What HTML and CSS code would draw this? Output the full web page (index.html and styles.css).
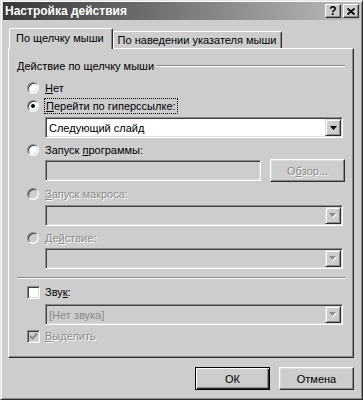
FILE: index.html
```html
<!DOCTYPE html>
<html lang="ru">
<head>
<meta charset="utf-8">
<title>Настройка действия</title>
<link rel="stylesheet" href="styles.css">
</head>
<body>
<div class="window">
  <div class="titlebar">
    <span class="title">Настройка действия</span>
    <div class="tbtns">
      <span class="tbtn">?</span>
      <span class="tbtn"><svg width="8" height="7" viewBox="0 0 8 7"><path d="M0.5 0.5 L7.5 6.5 M7.5 0.5 L0.5 6.5" stroke="#000" stroke-width="1.8"/></svg></span>
    </div>
  </div>
  <div class="content">
    <div class="tabs">
      <div class="tab active">По щелчку мыши</div>
      <div class="tab">По наведении указателя мыши</div>
    </div>
    <div class="panel">
      <div class="group-label"><span>Действие по щелчку мыши</span><i class="etch"></i></div>

      <div class="opt mt7"><span class="radio"></span><span><u>Н</u>ет</span></div>
      <div class="opt mt2"><span class="radio on"></span><span class="focus"><u>П</u>ерейти по гиперссылке:</span></div>
      <div class="field mt3"><span class="ftext">Следующий слайд</span><span class="dd"><svg width="7" height="4" viewBox="0 0 7 4"><path d="M0 0 H7 L3.5 4 Z" fill="#000"/></svg></span></div>

      <div class="opt mt4"><span class="radio"></span><span>Запуск <u>п</u>рограммы:</span></div>
      <div class="prog mt1">
        <span class="field off wide"></span>
        <span class="btn dis">О<u>б</u>зор...</span>
      </div>

      <div class="opt mt4"><span class="radio off"></span><span class="dis"><u>З</u>апуск макроса:</span></div>
      <div class="field off mt3"><span class="ftext"></span><span class="dd"><svg width="8" height="5" viewBox="0 0 8 5"><path d="M1 1 H8 L4.5 5 Z" fill="#fff"/><path d="M0 0 H7 L3.5 4 Z" fill="#8a8a8a"/></svg></span></div>

      <div class="opt mt4"><span class="radio off"></span><span class="dis">Де<u>й</u>ствие:</span></div>
      <div class="field off mt2"><span class="ftext"></span><span class="dd"><svg width="8" height="5" viewBox="0 0 8 5"><path d="M1 1 H8 L4.5 5 Z" fill="#fff"/><path d="M0 0 H7 L3.5 4 Z" fill="#8a8a8a"/></svg></span></div>

      <div class="sep"></div>

      <div class="opt chk mt5"><span class="check"></span><span>Зву<u>к</u>:</span></div>
      <div class="field off mt4"><span class="ftext grey">[Нет звука]</span><span class="dd"><svg width="8" height="5" viewBox="0 0 8 5"><path d="M1 1 H8 L4.5 5 Z" fill="#fff"/><path d="M0 0 H7 L3.5 4 Z" fill="#8a8a8a"/></svg></span></div>
      <div class="opt chk mt3"><span class="check off"><svg width="9" height="9" viewBox="0 0 9 9"><path d="M1 4 L3.5 6.5 L8 1.5" stroke="#8a8a8a" stroke-width="2" fill="none"/></svg></span><span class="dis"><u>В</u>ыделить</span></div>
    </div>
    <div class="actions">
      <span class="btn default">ОК</span>
      <span class="btn">Отмена</span>
    </div>
  </div>
</div>
</body>
</html>
```
FILE: styles.css
```css
body {
  margin: 0;
  width: 363px;
  height: 400px;
  overflow: hidden;
  background: #cdcdcd;
  font-family: "Liberation Sans", Arial, sans-serif;
  font-size: 11px;
  color: #000;
}

.window {
  box-sizing: border-box;
  width: 363px;
  height: 400px;
  background: #cdcdcd;
  border: 1px solid;
  border-color: #e4e4e4 #2e2e2e #2e2e2e #e4e4e4;
  box-shadow: inset 1px 1px 0 #fff, inset -1px -1px 0 #8a8a8a;
  padding: 1px 2px 2px;
}

.titlebar {
  height: 18px;
  display: flex;
  align-items: center;
  justify-content: space-between;
  padding: 0 1px 0 2px;
  background: linear-gradient(to right, #383838, #bcbcbc);
}

.title {
  color: #fff;
  font-weight: bold;
  font-size: 12px;
}

.tbtns {
  display: flex;
  gap: 2px;
}

.tbtn {
  box-sizing: border-box;
  width: 16px;
  height: 14px;
  background: #cdcdcd;
  border: 1px solid;
  border-color: #fff #2e2e2e #2e2e2e #fff;
  box-shadow: inset -1px -1px 0 #8a8a8a;
  display: flex;
  align-items: center;
  justify-content: center;
  font-weight: bold;
  font-size: 12px;
  line-height: 1;
}

.content {
  padding-left: 5px;
}

.tabs {
  display: flex;
  align-items: flex-end;
  height: 20px;
  margin-top: 8px;
  padding-left: 1px;
  position: relative;
  z-index: 1;
}

.tab {
  box-sizing: border-box;
  height: 17px;
  padding: 0 5px 0 4px;
  display: flex;
  align-items: center;
  background: #cdcdcd;
  border: 1px solid;
  border-bottom: none;
  border-color: #fff #2e2e2e transparent #fff;
  border-radius: 2px 2px 0 0;
  box-shadow: inset -1px 0 0 #8a8a8a;
  white-space: nowrap;
}

.tab.active {
  height: 21px;
  margin-bottom: -1px;
  padding: 0 8px 2px 6px;
}

.panel {
  box-sizing: border-box;
  width: 346px;
  height: 310px;
  border: 1px solid;
  border-color: #fff #2e2e2e #2e2e2e #fff;
  box-shadow: inset -1px -1px 0 #8a8a8a;
  padding: 10px 8px 0 8px;
}

.group-label {
  display: flex;
  align-items: center;
  height: 14px;
  gap: 3px;
}

.etch {
  flex: 1;
  height: 0;
  border-top: 1px solid #8a8a8a;
  border-bottom: 1px solid #fff;
}

.sep {
  height: 0;
  margin-top: 8px;
  border-top: 1px solid #8a8a8a;
  border-bottom: 1px solid #fff;
}

.opt {
  display: flex;
  align-items: center;
  height: 16px;
  margin-left: 10px;
  gap: 6px;
}

.opt.chk {
  gap: 5px;
}

.mt1 { margin-top: 1px; }
.mt2 { margin-top: 2px; }
.mt3 { margin-top: 3px; }
.mt4 { margin-top: 4px; }
.mt5 { margin-top: 5px; }
.mt7 { margin-top: 7px; }

.radio {
  position: relative;
  box-sizing: border-box;
  width: 12px;
  height: 12px;
  border-radius: 50%;
  border: 1px solid;
  border-color: #8a8a8a #fff #fff #8a8a8a;
  box-shadow: inset 1px 1px 0 #404040, inset -1px -1px 0 #dcdcdc;
  background: #fff;
  flex: none;
}

.radio.on::after {
  content: "";
  position: absolute;
  left: 3px;
  top: 3px;
  width: 4px;
  height: 4px;
  border-radius: 50%;
  background: #000;
}

.radio.off {
  background: #cdcdcd;
}

.check {
  box-sizing: border-box;
  width: 13px;
  height: 13px;
  border: 1px solid;
  border-color: #8a8a8a #fff #fff #8a8a8a;
  box-shadow: inset 1px 1px 0 #404040, inset -1px -1px 0 #dcdcdc;
  background: #fff;
  display: flex;
  align-items: center;
  justify-content: center;
  flex: none;
}

.check.off {
  background: #cdcdcd;
}

.focus {
  outline: 1px dotted #000;
  outline-offset: 0;
  padding: 0 1px;
  line-height: 14px;
}

.dis {
  color: #8a8a8a;
  text-shadow: 1px 1px 0 #fff;
}

.grey {
  color: #8a8a8a;
}

.field {
  box-sizing: border-box;
  width: 298px;
  height: 21px;
  margin-left: 28px;
  border: 1px solid;
  border-color: #8a8a8a #fff #fff #8a8a8a;
  box-shadow: inset 1px 1px 0 #404040, inset -1px -1px 0 #dcdcdc;
  background: #fff;
  display: flex;
  align-items: center;
}

.field.off {
  background: #cdcdcd;
}

.field.wide {
  width: 216px;
  margin-left: 0;
}

.ftext {
  padding-left: 3px;
  flex: 1;
}

.dd {
  box-sizing: border-box;
  width: 16px;
  height: 17px;
  margin-right: 1px;
  border: 1px solid;
  border-color: #dcdcdc #2e2e2e #2e2e2e #dcdcdc;
  box-shadow: inset 1px 1px 0 #fff, inset -1px -1px 0 #8a8a8a;
  background: #cdcdcd;
  display: flex;
  align-items: center;
  justify-content: center;
}

.prog {
  display: flex;
  align-items: center;
  gap: 9px;
  margin-left: 28px;
  height: 23px;
}

.btn {
  box-sizing: border-box;
  width: 75px;
  height: 23px;
  border: 1px solid;
  border-color: #fff #2e2e2e #2e2e2e #fff;
  box-shadow: inset -1px -1px 0 #8a8a8a, inset 1px 1px 0 #dcdcdc;
  background: #cdcdcd;
  display: flex;
  align-items: center;
  justify-content: center;
  flex: none;
}

.btn.default {
  border-color: #000;
  box-shadow: inset 1px 1px 0 #fff, inset -1px -1px 0 #2e2e2e, inset -2px -2px 0 #8a8a8a;
}

.actions {
  display: flex;
  justify-content: flex-end;
  gap: 9px;
  width: 346px;
  margin-top: 9px;
}
```
